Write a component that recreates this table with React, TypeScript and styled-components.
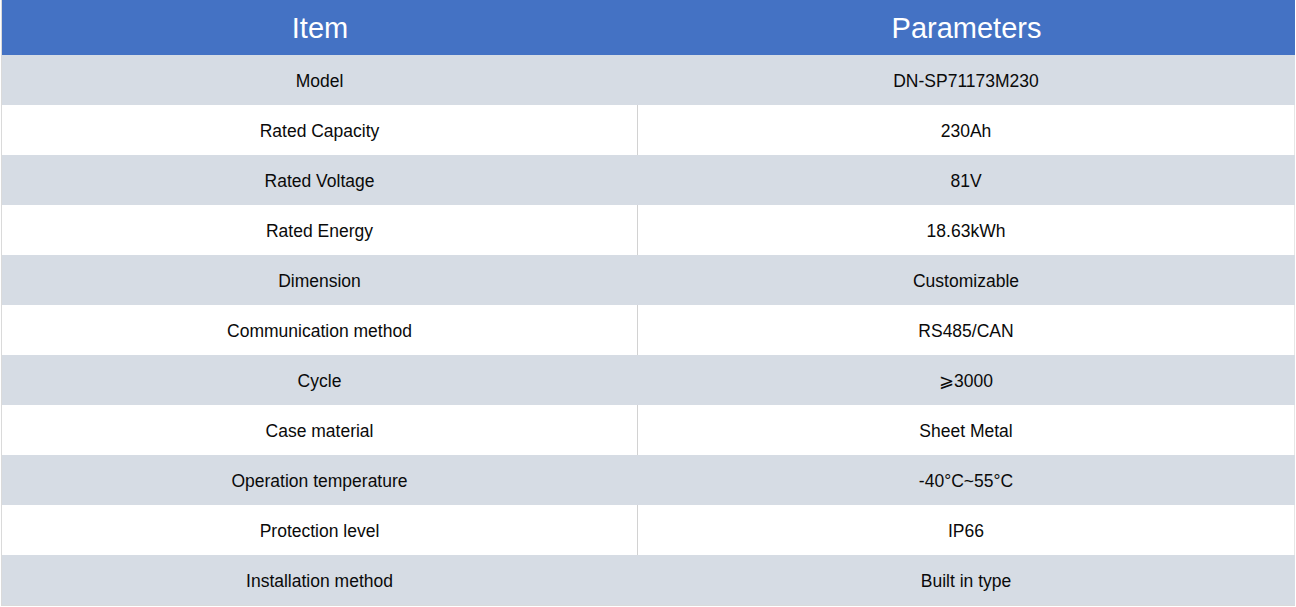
import React from "react";
import styled, { createGlobalStyle } from "styled-components";

const GlobalStyle = createGlobalStyle`
  html, body { margin: 0; padding: 0; background: #ffffff; }
  body { font-family: "Liberation Sans", Arial, sans-serif; }
`;

const Table = styled.div`
  margin-left: 1px;
  width: 1293px;
  display: grid;
  grid-template-columns: 636px 1fr;
  border-left: 1px solid #dadada;
  border-bottom: 1px solid #dadada;
`;

const HeadCell = styled.div`
  height: 55px;
  background: #4472c4;
  color: #ffffff;
  font-size: 29px;
  display: flex;
  align-items: center;
  justify-content: center;
  padding-top: 1px;
  box-sizing: border-box;
`;

const Cell = styled.div<{ $alt: boolean; $left?: boolean }>`
  height: 50px;
  background: ${(p) => (p.$alt ? "#d6dce4" : "#ffffff")};
  color: #0a0a0a;
  font-size: 17.5px;
  display: flex;
  align-items: center;
  justify-content: center;
  padding-top: 2px;
  box-sizing: border-box;
  border-right: 1px solid
    ${(p) => (p.$alt ? "#d6dce4" : p.$left ? "#d2d2d2" : "#e6e6e6")};
`;

const rows: [string, string][] = [
  ["Model", "DN-SP71173M230"],
  ["Rated Capacity", "230Ah"],
  ["Rated Voltage", "81V"],
  ["Rated Energy", "18.63kWh"],
  ["Dimension", "Customizable"],
  ["Communication method", "RS485/CAN"],
  ["Cycle", "⩾3000"],
  ["Case material", "Sheet Metal"],
  ["Operation temperature", "-40°C~55°C"],
  ["Protection level", "IP66"],
  ["Installation method", "Built in type"],
];

export default function App() {
  return (
    <>
      <GlobalStyle />
      <Table>
        <HeadCell>Item</HeadCell>
        <HeadCell>Parameters</HeadCell>
        {rows.map(([k, v], i) => (
          <React.Fragment key={k}>
            <Cell $alt={i % 2 === 0} $left>
              {k}
            </Cell>
            <Cell $alt={i % 2 === 0}>{v}</Cell>
          </React.Fragment>
        ))}
      </Table>
    </>
  );
}
